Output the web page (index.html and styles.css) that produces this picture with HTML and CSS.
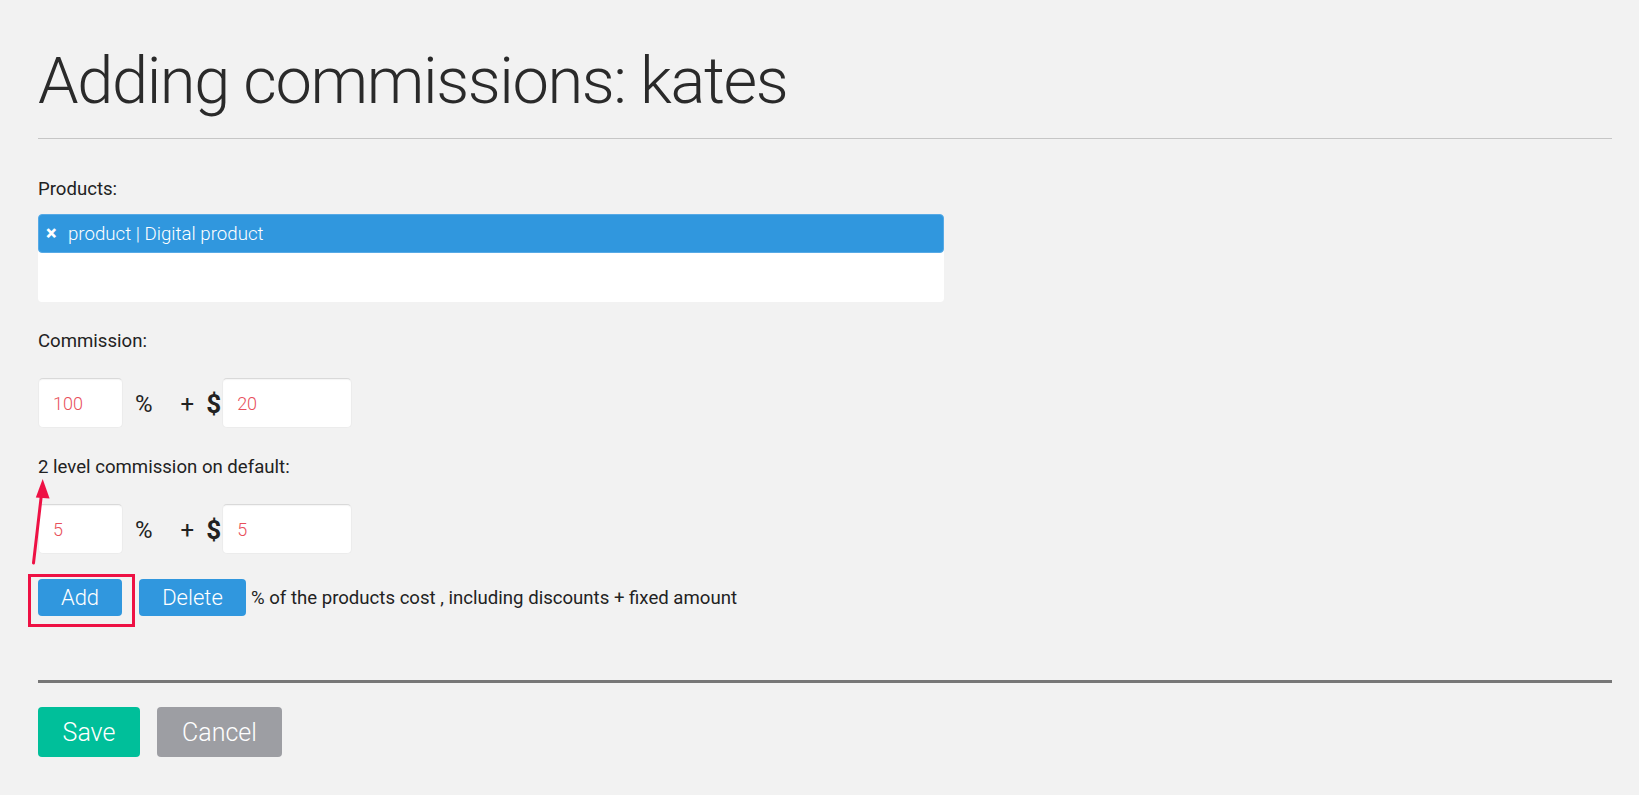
FILE: index.html
```html
<!DOCTYPE html>
<html lang="en">
<head>
<meta charset="utf-8">
<title>Adding commissions: kates</title>
<link rel="stylesheet" href="styles.css">
</head>
<body>
<div class="page">
  <h1 class="title">Adding commissions: kates</h1>
  <hr class="rule">

  <div class="label label-products">Products:</div>
  <div class="select">
    <div class="tag"><span class="tag-x">×</span><span class="tag-text">product | Digital product</span></div>
  </div>

  <div class="label label-gap">Commission:</div>
  <div class="row">
    <input class="field field-pct" type="text" value="100">
    <span class="sym pct">%</span>
    <span class="sym plus">+</span>
    <span class="sym dollar">$</span>
    <input class="field field-fix" type="text" value="20">
  </div>

  <div class="label label-gap">2 level commission on default:</div>
  <div class="row">
    <input class="field field-pct" type="text" value="5">
    <span class="sym pct">%</span>
    <span class="sym plus">+</span>
    <span class="sym dollar">$</span>
    <input class="field field-fix" type="text" value="5">
  </div>

  <div class="actions">
    <button class="btn btn-blue btn-add" type="button">Add</button>
    <button class="btn btn-blue btn-delete" type="button">Delete</button>
    <span class="note">% of the products cost , including discounts + fixed amount</span>
    <span class="highlight"></span>
  </div>

  <div class="footer">
    <button class="btn-lg btn-save" type="button">Save</button>
    <button class="btn-lg btn-cancel" type="button">Cancel</button>
  </div>
</div>

<svg class="arrow" width="40" height="100" viewBox="0 0 40 100" xmlns="http://www.w3.org/2000/svg">
  <line x1="13.5" y1="93" x2="21.5" y2="24" stroke="#ee1144" stroke-width="3" stroke-linecap="round"/>
  <polygon points="22.7,9 15.8,27.5 29.6,28.6" fill="#ee1144"/>
</svg>
</body>
</html>
```

FILE: styles.css
```css
html, body {
  margin: 0;
  padding: 0;
  background: #f2f2f2;
}

body {
  font-family: Roboto, "Liberation Sans", Arial, sans-serif;
  color: #222;
}

.page {
  margin: 0 27px 0 38px;
  padding-top: 41px;
  padding-bottom: 36px;
}

.title {
  margin: 0;
  font-size: 65px;
  line-height: 80px;
  font-weight: 300;
  color: #2a2a2a;
  letter-spacing: -1.4px;
}

.rule {
  margin: 17px 0 0 0;
  border: 0;
  border-top: 1px solid #c6c6c6;
  height: 0;
}

.label {
  font-size: 18.6px;
  line-height: 22px;
  color: #222;
}

.label-products {
  margin-top: 39px;
}

.label-gap {
  margin-top: 28px;
}

.select {
  margin-top: 14px;
  width: 906px;
  height: 88px;
  background: #fff;
  border-radius: 4px;
}

.tag {
  box-sizing: border-box;
  height: 39px;
  background: #3097de;
  border: 1px solid #57aae6;
  border-radius: 4px;
  display: flex;
  align-items: center;
  color: #fff;
  padding-left: 7px;
}

.tag-x {
  font-weight: 900;
  font-size: 20px;
  line-height: 20px;
  width: 22px;
  position: relative;
  top: -1px;
}

.tag-text {
  font-size: 18.7px;
  font-weight: 300;
}

.row {
  margin-top: 26px;
  height: 50px;
  display: flex;
  align-items: center;
}

.field {
  box-sizing: border-box;
  height: 50px;
  border: 1px solid #ececec;
  border-top-color: #d9d9d9;
  border-radius: 5px;
  background: #fff;
  padding: 0 0 0 14px;
  font-family: Roboto, "Liberation Sans", Arial, sans-serif;
  font-size: 18px;
  font-weight: 300;
  color: #e8505b;
  outline: none;
  box-shadow: inset 0 1px 1px rgba(0,0,0,0.04);
}

.field-pct {
  width: 85px;
}

.field-fix {
  width: 130px;
  margin-left: 1px;
}

.sym {
  font-size: 24px;
  color: #222;
  line-height: 30px;
  position: relative;
  top: 1px;
}

.pct {
  margin-left: 12px;
}

.plus {
  margin-left: 28px;
}

.dollar {
  margin-left: 12px;
  font-size: 26px;
  font-weight: 700;
}

.actions {
  position: relative;
  margin-top: 25px;
  display: flex;
  align-items: center;
  height: 37px;
}

.btn {
  height: 37px;
  border: 0;
  border-radius: 4px;
  color: #fff;
  font-family: Roboto, "Liberation Sans", Arial, sans-serif;
  font-size: 22px;
  font-weight: 300;
  padding: 0;
  cursor: pointer;
}

.btn-blue {
  background: #3097de;
}

.btn-add {
  width: 84px;
}

.btn-delete {
  width: 107px;
  margin-left: 17px;
}

.note {
  margin-left: 5px;
  font-size: 18.6px;
  color: #222;
}

.highlight {
  position: absolute;
  left: -10px;
  top: -5px;
  width: 101px;
  height: 47px;
  border: 3px solid #ee1144;
  pointer-events: none;
}

.footer {
  margin-top: 64px;
  border-top: 3px solid #777;
  padding-top: 24px;
  display: flex;
  gap: 17px;
}

.btn-lg {
  height: 50px;
  border: 0;
  border-radius: 4px;
  color: #fff;
  font-family: Roboto, "Liberation Sans", Arial, sans-serif;
  font-size: 25px;
  font-weight: 300;
  padding: 0;
  cursor: pointer;
}

.btn-save {
  width: 102px;
  background: #00bf9a;
}

.btn-cancel {
  width: 125px;
  background: #9d9ea3;
}

.arrow {
  position: absolute;
  left: 20px;
  top: 470px;
}
```
